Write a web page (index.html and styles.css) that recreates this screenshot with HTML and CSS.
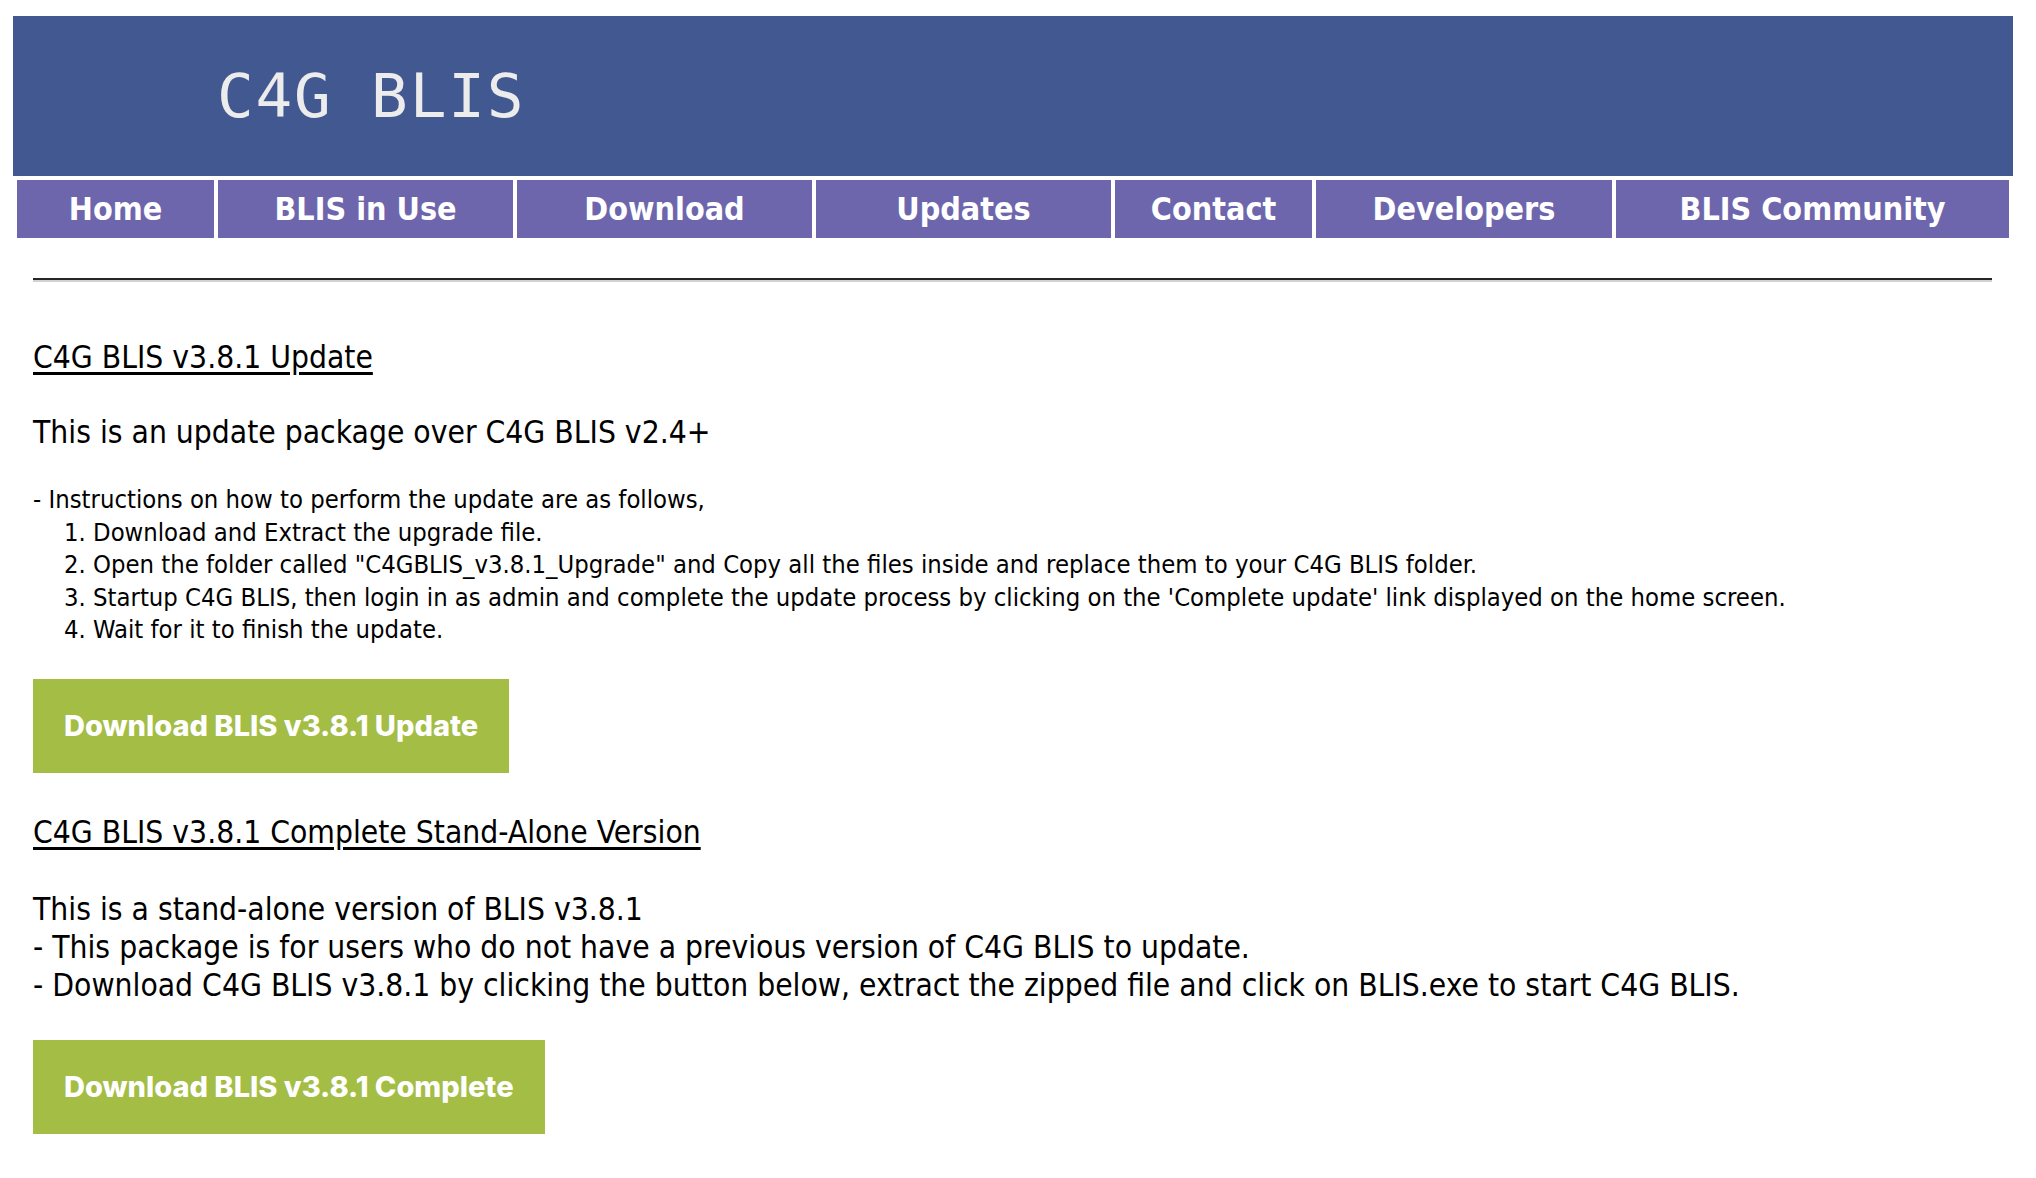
FILE: index.html
```html
<!DOCTYPE html>
<html lang="en">
<head>
<meta charset="utf-8">
<title>C4G BLIS - Updates</title>
<link rel="stylesheet" href="styles.css">
</head>
<body>
<div class="page">
  <header class="banner">
    <div class="banner-title">C4G BLIS</div>
  </header>
  <nav class="nav">
    <a class="nav-item w-home" href="#">Home</a>
    <a class="nav-item w-use" href="#">BLIS in Use</a>
    <a class="nav-item w-download" href="#">Download</a>
    <a class="nav-item w-updates" href="#">Updates</a>
    <a class="nav-item w-contact" href="#">Contact</a>
    <a class="nav-item w-dev" href="#">Developers</a>
    <a class="nav-item w-community" href="#">BLIS Community</a>
  </nav>
  <main class="content">
    <hr class="rule">
    <h2 class="section-title first">C4G BLIS v3.8.1 Update</h2>
    <p class="lead">This is an update package over C4G BLIS v2.4+</p>
    <div class="instructions">
      <div>- Instructions on how to perform the update are as follows,</div>
      <ol class="steps">
        <li>Download and Extract the upgrade file.</li>
        <li>Open the folder called "C4GBLIS_v3.8.1_Upgrade" and Copy all the files inside and replace them to your C4G BLIS folder.</li>
        <li>Startup C4G BLIS, then login in as admin and complete the update process by clicking on the 'Complete update' link displayed on the home screen.</li>
        <li>Wait for it to finish the update.</li>
      </ol>
    </div>
    <a class="btn btn-update" href="#">Download BLIS v3.8.1 Update</a>
    <h2 class="section-title second">C4G BLIS v3.8.1 Complete Stand-Alone Version</h2>
    <div class="lead-block">
      <div>This is a stand-alone version of BLIS v3.8.1</div>
      <div>- This package is for users who do not have a previous version of C4G BLIS to update.</div>
      <div>- Download C4G BLIS v3.8.1 by clicking the button below, extract the zipped file and click on BLIS.exe to start C4G BLIS.</div>
    </div>
    <a class="btn btn-complete" href="#">Download BLIS v3.8.1 Complete</a>
  </main>
</div>
</body>
</html>
```

FILE: styles.css
```css
html, body {
  margin: 0;
  padding: 0;
  background: #ffffff;
}

body {
  font-family: "DejaVu Sans", sans-serif;
  font-stretch: condensed;
  color: #000000;
}

.page {
  padding: 16px 23px 0 13px;
}

.banner {
  height: 160px;
  background: #425891;
  display: flex;
  align-items: center;
  padding-left: 204px;
  box-sizing: border-box;
}

.banner-title {
  font-family: "DejaVu Sans Mono", monospace;
  font-stretch: normal;
  font-size: 61px;
  color: #ececec;
  letter-spacing: 1.8px;
  line-height: 1;
  margin-top: -2px;
}

.nav {
  display: flex;
  gap: 4px;
  padding: 4px;
}

.nav-item {
  flex: none;
  height: 58px;
  background: #6e66ad;
  color: #ffffff;
  text-decoration: none;
  font-family: "DejaVu Sans", sans-serif;
  font-stretch: condensed;
  font-weight: bold;
  font-size: 32px;
  display: flex;
  align-items: center;
  justify-content: center;
}

.w-home { width: 197px; }
.w-use { width: 295px; }
.w-download { width: 295px; }
.w-updates { width: 295px; }
.w-contact { width: 197px; }
.w-dev { width: 296px; }
.w-community { width: 393px; }

.content {
  padding: 0 21px 40px 20px;
}

.rule {
  margin: 36px 0 0 0;
  height: 0;
  border: 0;
  border-top: 2px solid #262626;
  border-bottom: 2px solid #d2d2d2;
}

.section-title {
  font-weight: normal;
  font-size: 31.5px;
  line-height: 38px;
  text-decoration: underline;
  text-underline-offset: 4px;
  margin: 0;
}

.section-title.first {
  margin-top: 56px;
}

.section-title.second {
  margin-top: 40px;
}

.lead {
  font-size: 31.5px;
  line-height: 38px;
  margin: 37px 0 0 0;
}

.instructions {
  font-size: 25.4px;
  line-height: 32.5px;
  margin-top: 32px;
}

.steps {
  margin: 0;
  padding-left: 31px;
  list-style-position: inside;
}

.btn {
  display: inline-flex;
  align-items: center;
  height: 94px;
  padding: 0 31px;
  background: #a3bd45;
  color: #ffffff;
  text-decoration: none;
  font-family: "Inter", sans-serif;
  font-stretch: normal;
  font-weight: 800;
  font-size: 29px;
  letter-spacing: 0;
}

.btn-update {
  margin-top: 33px;
}

.btn-complete {
  margin-top: 35px;
}

.lead-block {
  font-size: 31.5px;
  line-height: 38.4px;
  margin-top: 39px;
}
```
